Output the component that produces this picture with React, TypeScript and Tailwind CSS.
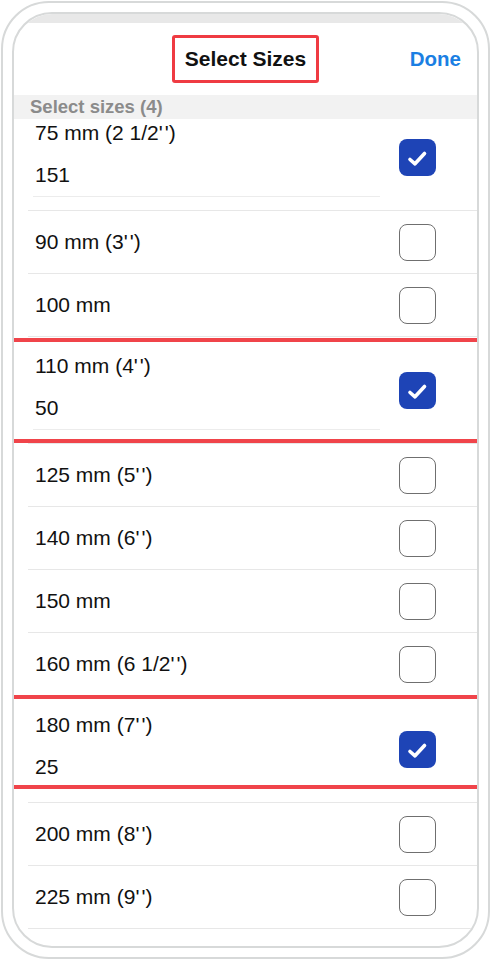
import React from 'react';

interface Size {
  label: string;
  value?: string;
  checked?: boolean;
  // red annotation offsets (top / bottom line, px from the row top)
  marks?: [number, number];
}

const sizes: Size[] = [
  { label: "75 mm (2 1/2'')", value: '151', checked: true },
  { label: "90 mm (3'')" },
  { label: '100 mm' },
  { label: "110 mm (4'')", value: '50', checked: true, marks: [1, 102] },
  { label: "125 mm (5'')" },
  { label: "140 mm (6'')" },
  { label: '150 mm' },
  { label: "160 mm (6 1/2'')" },
  { label: "180 mm (7'')", value: '25', checked: true, marks: [-1, 89] },
  { label: "200 mm (8'')" },
  { label: "225 mm (9'')" },
];

// keep the two single quotes apart, like the iOS font draws them
const Label = ({ text }: { text: string }) => {
  const parts = text.split("''");
  if (parts.length < 2) return <>{text}</>;
  return (
    <>
      {parts[0]}
      <span className="tracking-[2px]">'</span>'{parts[1]}
    </>
  );
};

const Checkbox = ({ checked }: { checked?: boolean }) =>
  checked ? (
    <div className="w-[37px] h-[37px] rounded-[8px] bg-[#1e44b6] flex items-center justify-center">
      <svg width="37" height="37" viewBox="0 0 37 37" fill="none">
        <path d="M11 20.5 L16 24.8 L25.5 14.5" stroke="white" strokeWidth="3.6" strokeLinecap="round" strokeLinejoin="round" />
      </svg>
    </div>
  ) : (
    <div className="w-[37px] h-[37px] rounded-[8px] border-[1.5px] border-[#6f6f6f] bg-white" />
  );

const Row = ({ item }: { item: Size }) => {
  const row = (
    <div className="ml-[14px] border-b border-[#e7e7e7] flex items-center justify-between pl-[5px] pr-[41px]">
      {item.value ? (
        <div className="w-[347px] pt-[17px] pb-[13px]">
          <div className="h-[24px] leading-[24px] pl-[2px]"><Label text={item.label} /></div>
          <div className="h-[24px] leading-[24px] pl-[2px] mt-[18px]">{item.value}</div>
          <div className="mt-[9px] h-px bg-[#ececec]" />
        </div>
      ) : (
        <div className="h-[62px] flex items-center pl-[2px]"><Label text={item.label} /></div>
      )}
      <Checkbox checked={item.checked} />
    </div>
  );
  if (!item.marks) return row;
  return (
    <div className="relative">
      {row}
      {/* red annotation lines */}
      <div className="absolute left-0 right-0 h-[4px] bg-[#f0444a]" style={{ top: item.marks[0] }} />
      <div className="absolute left-0 right-0 h-[4px] bg-[#f0444a]" style={{ top: item.marks[1] }} />
    </div>
  );
};

export default function App() {
  return (
    <div className="w-[491px] h-[960px] bg-white p-[1px] font-['Liberation_Sans',Arial,sans-serif] text-[#111111]">
      <div className="h-full rounded-[48px] border-2 border-[#d7d9d9] p-[9px]">
        <div className="h-full rounded-[40px] border-2 border-[#d7d9d9] overflow-hidden flex flex-col bg-white">
          <div className="h-[9px] bg-[#e8e8e8] shrink-0" />
          <div className="h-[72px] shrink-0 grid grid-cols-[1fr_auto_1fr] items-center">
            <div />
            <div className="w-[147px] h-[48px] border-[3px] border-[#ef3b42] rounded-[3px] flex items-center justify-center text-[21px] font-bold">
              Select Sizes
            </div>
            <div className="flex justify-end pr-[16px] text-[20.5px] font-bold text-[#1b7fe3]">Done</div>
          </div>
          <div className="relative z-10 h-[24px] shrink-0 bg-[#f2f2f2] pl-[16px] flex items-center text-[18.5px] font-bold text-[#8b8b8b]">
            Select sizes (4)
          </div>
          <div className="-mt-[15px] flex-1 overflow-hidden text-[21px]">
            {sizes.map(s => (
              <Row key={s.label} item={s} />
            ))}
            <div className="ml-[14px] h-[63px]" />
          </div>
        </div>
      </div>
    </div>
  );
}
